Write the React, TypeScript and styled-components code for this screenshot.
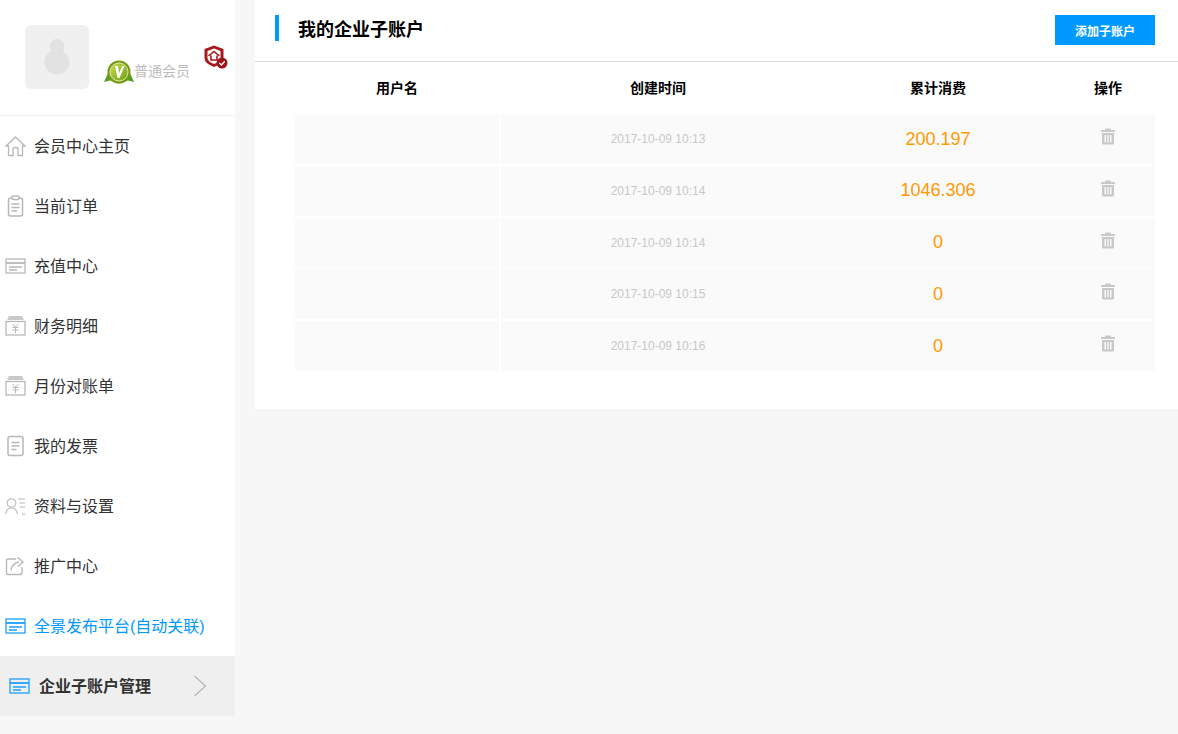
import { createGlobalStyle } from 'styled-components';
import styled from 'styled-components';

const GlobalStyle = createGlobalStyle`
  html, body {
    margin: 0;
    padding: 0;
    background: #f7f7f7;
    font-family: "Liberation Sans", "Noto Sans CJK SC", sans-serif;
  }
`;

type IconKind = 'home' | 'order' | 'card' | 'money' | 'invoice' | 'profile' | 'share';

const NavIcon = ({ kind, color = '#b8b8b8' }: { kind: IconKind; color?: string }) => {
  if (kind === 'home') {
    return (
      <svg width="21" height="22" viewBox="0 0 21 22" fill="none" stroke={color} strokeWidth="1.3">
        <path d="M1 11 L10.5 2 L20 11 L17.5 11 L17.5 20.5 L13 20.5 L13 14 Q13 12.5 10.5 12.5 Q8 12.5 8 14 L8 20.5 L3.5 20.5 L3.5 11 Z" />
      </svg>
    );
  }
  if (kind === 'order') {
    return (
      <svg width="21" height="22" viewBox="0 0 21 22" fill="none" stroke={color} strokeWidth="1.5">
        <rect x="3.5" y="3" width="14" height="18" rx="2" />
        <rect x="7" y="1" width="7" height="3.5" rx="1" fill="#fff" />
        <path d="M6.5 9 H14.5 M6.5 12.5 H14.5 M6.5 16 H12" />
      </svg>
    );
  }
  if (kind === 'card') {
    return (
      <svg width="21" height="16" viewBox="0 0 21 16" fill="none" stroke={color} strokeWidth="1.3">
        <rect x="1" y="1" width="19" height="14" />
        <path d="M1 5 H20" strokeWidth="1.8" />
        <path d="M4 9 H17 M4 12 H12" strokeWidth="1.5" />
      </svg>
    );
  }
  if (kind === 'money') {
    return (
      <svg width="21" height="20" viewBox="0 0 21 20" fill="none" stroke={color} strokeWidth="1.3">
        <path d="M3.5 1 H17.5 M2.5 3 H18.5" />
        <rect x="1" y="5.5" width="19" height="13.5" />
        <path d="M7.5 8 L10.5 11 L13.5 8 M7.5 11.5 H13.5 M7.5 14 H13.5 M10.5 11 V17" strokeWidth="1" />
      </svg>
    );
  }
  if (kind === 'invoice') {
    return (
      <svg width="21" height="22" viewBox="0 0 21 22" fill="none" stroke={color} strokeWidth="1.5">
        <rect x="3" y="1.5" width="15" height="19" rx="2" />
        <path d="M6.5 7.5 H14.5 M6.5 11 H14.5 M6.5 14.5 H11.5" />
      </svg>
    );
  }
  if (kind === 'profile') {
    return (
      <svg width="21" height="18" viewBox="0 0 21 18" fill="none" stroke={color} strokeWidth="1.1">
        <circle cx="6.5" cy="6" r="4.3" />
        <path d="M0.8 17 Q1.5 11 6.5 11 Q11.5 11 12.5 17" />
        <path d="M13 2 H20 M14.5 6 H20 M14.5 10 H20 M17 17 H20" />
      </svg>
    );
  }
  return (
    <svg width="21" height="20" viewBox="0 0 21 20" fill="none" stroke={color} strokeWidth="1.4">
      <path d="M11 3 H3 Q1.5 3 1.5 4.5 V17 Q1.5 18.5 3 18.5 H15.5 Q17 18.5 17 17 V11" />
      <path d="M6 14.5 Q7 7 14 6" />
      <path d="M12.5 1.5 L18 6 L13 10.5" />
    </svg>
  );
};

const TrashIcon = () => (
  <svg width="14" height="17" viewBox="0 0 14 17" fill="#c8c8c8">
    <path d="M4.5 0.5 H9.5 L10 2 H13 Q14 2 14 3 V4 H0 V3 Q0 2 1 2 H4 Z" />
    <path d="M1 5 H13 V15 Q13 16.5 11.5 16.5 H2.5 Q1 16.5 1 15 Z M3.5 7 V14.5 H5 V7 Z M6.3 7 V14.5 H7.7 V7 Z M9 7 V14.5 H10.5 V7 Z" fillRule="evenodd" />
  </svg>
);

const menu: { label: string; icon: IconKind }[] = [
  { label: '会员中心主页', icon: 'home' },
  { label: '当前订单', icon: 'order' },
  { label: '充值中心', icon: 'card' },
  { label: '财务明细', icon: 'money' },
  { label: '月份对账单', icon: 'money' },
  { label: '我的发票', icon: 'invoice' },
  { label: '资料与设置', icon: 'profile' },
  { label: '推广中心', icon: 'share' },
];

const accounts = [
  { time: '2017-10-09 10:13', total: '200.197' },
  { time: '2017-10-09 10:14', total: '1046.306' },
  { time: '2017-10-09 10:14', total: '0' },
  { time: '2017-10-09 10:15', total: '0' },
  { time: '2017-10-09 10:16', total: '0' },
];

const App = () => {
  return (
    <>
      <GlobalStyle />
      <Page>
        <Sidebar>
          <Profile>
            <Avatar>
              <svg width="26" height="36" viewBox="0 0 26 36" fill="#e2e2e2">
                <circle cx="13" cy="7.5" r="7.5" />
                <circle cx="13" cy="23" r="12.5" />
              </svg>
            </Avatar>
            <MemberLine>
              <svg width="30" height="24" viewBox="0 0 30 24">
                <defs>
                  <linearGradient id="medal" x1="0" y1="0" x2="1" y2="1">
                    <stop offset="0" stopColor="#c8dc50" />
                    <stop offset="1" stopColor="#6f9e12" />
                  </linearGradient>
                </defs>
                <path d="M0 22 L4 13 L26 13 L30 22 L24 20.5 L15 23.5 L6 20.5 Z" fill="#56a01e" />
                <circle cx="15" cy="12" r="11.5" fill="#7a9a14" />
                <circle cx="15" cy="12" r="9" fill="url(#medal)" stroke="#dcebb0" strokeWidth="1" />
                <path d="M11 6 L13.5 18 L15.5 18 L20.5 6 L18 6 L15 13.5 L14 6 Z" fill="#fff" />
              </svg>
              <MemberName>普通会员</MemberName>
            </MemberLine>
            <ShieldWrap>
              <svg width="24" height="24" viewBox="0 0 24 24">
                <path d="M10 0.5 L19.5 4 V13 Q19.5 18.5 10 22 Q0.5 18.5 0.5 13 V4 Z" fill="#a81a1e" />
                <path d="M10 3.5 L16.5 6 V12.8 Q16.5 16.5 10 19 Q3.5 16.5 3.5 12.8 V6 Z" fill="#fff" />
                <path d="M4.5 11 L10 6.5 L15.5 11 M7 10.5 V15 H13 V10.5" fill="none" stroke="#a81a1e" strokeWidth="1.6" />
                <circle cx="18" cy="18" r="5.5" fill="#a01318" />
                <path d="M15.3 18 L17.4 20 L20.8 16.3" fill="none" stroke="#fff" strokeWidth="1.3" />
              </svg>
            </ShieldWrap>
          </Profile>
          {menu.map((item) => (
            <NavItem key={item.label}>
              <IconSlot>
                <NavIcon kind={item.icon} />
              </IconSlot>
              <NavLabel>{item.label}</NavLabel>
            </NavItem>
          ))}
          <NavItem $highlight>
            <IconSlot>
              <NavIcon kind="card" color="#1e9eff" />
            </IconSlot>
            <NavLabel>全景发布平台(自动关联)</NavLabel>
          </NavItem>
          <ActiveItem>
            <IconSlot>
              <NavIcon kind="card" color="#1e9eff" />
            </IconSlot>
            <ActiveLabel>企业子账户管理</ActiveLabel>
            <svg width="14" height="22" viewBox="0 0 14 22" fill="none" stroke="#b4b4b4" strokeWidth="1.2">
              <path d="M1.5 1 L12.5 11 L1.5 21" />
            </svg>
          </ActiveItem>
        </Sidebar>
        <Main>
          <Header>
            <TitleBar />
            <Title>我的企业子账户</Title>
            <AddButton>添加子账户</AddButton>
          </Header>
          <TableWrap>
            <HeadRow>
              <HeadCell>用户名</HeadCell>
              <HeadCell>创建时间</HeadCell>
              <HeadCell>累计消费</HeadCell>
              <HeadCell>操作</HeadCell>
            </HeadRow>
            <Rows>
              {accounts.map((account, index) => (
                <Row key={index}>
                  <NameCell />
                  <TimeCell>{account.time}</TimeCell>
                  <TotalCell>{account.total}</TotalCell>
                  <ActionCell>
                    <TrashIcon />
                  </ActionCell>
                </Row>
              ))}
            </Rows>
          </TableWrap>
        </Main>
      </Page>
    </>
  );
};

export default App;

const Page = styled.div`
  display: flex;
  align-items: flex-start;
  gap: 20px;
  height: 734px;
  overflow: hidden;
  background: #f7f7f7;
`;

const Sidebar = styled.aside`
  flex: 0 0 235px;
  background: #fff;
`;

const Profile = styled.div`
  display: flex;
  align-items: flex-start;
  height: 116px;
  box-sizing: border-box;
  padding: 25px 0 0 25px;
  border-bottom: 1px solid #f0f0f0;
`;

const Avatar = styled.div`
  width: 64px;
  height: 64px;
  border-radius: 6px;
  background: #f0f0f0;
  display: flex;
  align-items: center;
  justify-content: center;
`;

const MemberLine = styled.div`
  display: flex;
  align-items: center;
  margin: 35px 0 0 15px;
`;

const MemberName = styled.span`
  font-size: 14px;
  line-height: 20px;
  color: #bcbcbc;
  margin-top: -3px;
  white-space: nowrap;
`;

const ShieldWrap = styled.div`
  margin: 20px 0 0 14px;
  height: 24px;
`;

const NavItem = styled.div<{ $highlight?: boolean }>`
  display: flex;
  align-items: center;
  height: 60px;
  gap: 8px;
  padding-left: 5px;
  font-size: 16px;
  color: ${(p) => (p.$highlight ? '#0099ff' : '#333')};
`;

const NavLabel = styled.span`
  margin-top: -2px;
`;

const ActiveItem = styled.div`
  display: flex;
  align-items: center;
  height: 60px;
  gap: 9px;
  padding-left: 9px;
  background: #efefef;
`;

const ActiveLabel = styled.span`
  width: 145px;
  margin-top: -2px;
  font-size: 16px;
  font-weight: bold;
  color: #333;
`;

const IconSlot = styled.span`
  display: flex;
  width: 21px;
  justify-content: center;
`;

const Main = styled.main`
  flex: 1;
  min-width: 0;
  height: 409px;
  background: #fff;
`;

const Header = styled.header`
  display: flex;
  align-items: center;
  height: 61px;
  padding: 0 23px 0 20px;
  border-bottom: 1px solid #dcdcdc;
`;

const TitleBar = styled.span`
  width: 4px;
  height: 26px;
  margin-top: -5px;
  background: #0099ff;
`;

const Title = styled.h1`
  flex: 1;
  margin: -6px 0 0 19px;
  font-size: 18px;
  font-weight: bold;
  color: #000;
`;

const AddButton = styled.button`
  width: 100px;
  height: 30px;
  margin-top: -1px;
  padding: 0;
  border: none;
  background: #0099ff;
  color: #fff;
  font-family: inherit;
  font-size: 12px;
  font-weight: bold;
`;

const TableWrap = styled.div`
  padding: 0 23px 0 40px;
`;

const HeadRow = styled.div`
  display: grid;
  grid-template-columns: 206px 1fr 246px 94px;
  height: 52.2px;
  padding-bottom: 3px;
  box-sizing: border-box;
  align-items: center;
`;

const HeadCell = styled.div`
  text-align: center;
  font-size: 14px;
  font-weight: bold;
  color: #000;

  &:first-child {
    padding-right: 2px;
  }
`;

const Rows = styled.div`
  display: flex;
  flex-direction: column;
  gap: 1.75px;
`;

const Row = styled.div`
  display: grid;
  grid-template-columns: 206px 1fr 246px 94px;
  height: 50px;
  background: linear-gradient(to right, #fafafa 204px, #fff 204px, #fff 206px, #fafafa 206px);
  align-items: center;
  text-align: center;
`;

const NameCell = styled.div``;

const TimeCell = styled.div`
  font-size: 12px;
  color: #c8c8c8;
`;

const TotalCell = styled.div`
  font-size: 18px;
  color: #ff9900;
`;

const ActionCell = styled.div`
  display: flex;
  justify-content: center;
  margin-top: -5px;
`;
